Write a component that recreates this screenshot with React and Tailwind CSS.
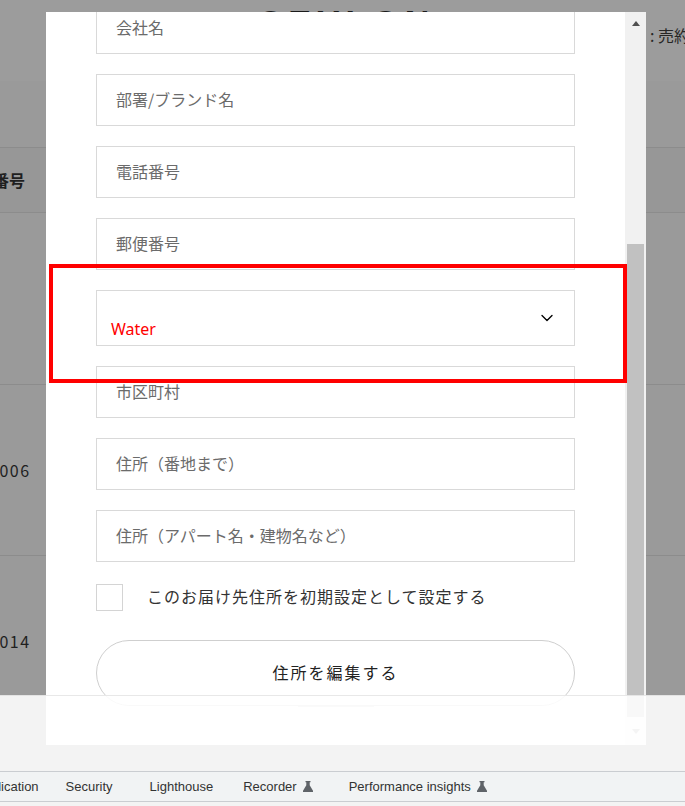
import { ChevronDown } from 'lucide-react';

const fields = ['会社名', '部署/ブランド名', '電話番号', '郵便番号'];
const fields2 = ['市区町村', '住所（番地まで）', '住所（アパート名・建物名など）'];

const Flask = () => (
  <svg width="10" height="11" viewBox="0 0 10 11" className="ml-[6px] text-[#5f6368]">
    <path d="M2.5 0h5v1.2h-0.8v3l3.3 5.6v1.2h-10v-1.2l3.3-5.6v-3h-0.8z" fill="currentColor" />
  </svg>
);

const TextField = ({ label }) => (
  <div className="h-[52px] border border-[#d9d9d9] flex items-center pl-[19px] pb-[2px] text-[16px] text-[#6b6b6b]">
    {label}
  </div>
);

const App = () => {
  return (
    <div className="relative w-[685px] h-[806px] overflow-hidden bg-[#9a9a9a] font-['Noto_Sans_CJK_JP',sans-serif]">
      {/* page under the dimmed overlay */}
      <div className="flex flex-col w-full">
        <div className="h-[81px] bg-[#9c9c9c] flex flex-col">
          <div className="h-[24px] flex justify-center pt-[5px] pl-[8px]">
            <span className="text-[34px] leading-none font-bold tracking-[6px] text-[#1a1a1a] font-['Liberation_Sans',sans-serif]">CEYLON</span>
          </div>
          <div className="pl-[650px] whitespace-nowrap text-[16px] text-[#262626] mt-[-1px]">: 売約済み</div>
        </div>
        <div className="h-[66px]" />
        <div className="h-[66px] border-y border-[#8c8c8c] bg-[#979797] flex items-center">
          <span className="ml-[-39px] text-[16px] font-bold text-[#1f1f1f] whitespace-nowrap">電話番号</span>
        </div>
        <div className="h-[172px] border-b border-[#8c8c8c]" />
        <div className="h-[171px] border-b border-[#8c8c8c] flex items-center">
          <span className="ml-[-11px] text-[16px] tracking-[1.5px] text-[#1f1f1f]">0006</span>
        </div>
        <div className="h-[170px] flex items-center">
          <span className="ml-[-11px] text-[16px] tracking-[1.5px] text-[#1f1f1f]">0014</span>
        </div>
      </div>

      {/* modal */}
      <div className="absolute left-[46px] top-[12px] w-[600px] h-[733px] bg-white flex overflow-hidden">
        <div className="flex-1 overflow-hidden">
          <div className="mt-[-10px] px-[50px] flex flex-col">
            <div className="flex flex-col gap-[20px]">
              {fields.map((f) => (
                <TextField key={f} label={f} />
              ))}
              <div className="h-[56px] border border-[#d9d9d9] flex justify-between pl-[14px] pr-[17px]">
                <span className="self-end pb-[4px] text-[16px] text-[#ff0000] font-['Noto_Sans',sans-serif]">Water</span>
                <ChevronDown className="self-center w-[20px] h-[20px] text-black" strokeWidth={1.6} />
              </div>
              {fields2.map((f) => (
                <TextField key={f} label={f} />
              ))}
            </div>
            <div className="mt-[22px] flex items-center">
              <div className="w-[27px] h-[27px] border border-[#d4d4d4]" />
              <span className="ml-[24px] pb-[3px] text-[16px] tracking-[1px] text-[#333]">このお届け先住所を初期設定として設定する</span>
            </div>
            <div className="mt-[29px] h-[66px] rounded-full border border-[#cfcfcf] flex items-center justify-center pb-[3px] text-[16px] tracking-[2px] text-[#222]">
              住所を編集する
            </div>
            <div className="self-center w-[76px] h-[1px] bg-[#d0d0d0]" />
          </div>
        </div>
        {/* scrollbar */}
        <div className="w-[21px] h-full bg-[#f1f1f1] flex flex-col items-center">
          <div className="h-[22px] flex items-center justify-center">
            <div className="w-0 h-0 border-x-[4.5px] border-x-transparent border-b-[5px] border-b-[#505050]" />
          </div>
          <div className="h-[210px]" />
          <div className="w-[17px] h-[473px] bg-[#c1c1c1]" />
          <div className="flex-1 flex items-center justify-center">
            <div className="w-0 h-0 border-x-[4.5px] border-x-transparent border-t-[5px] border-t-[#a3a3a3]" />
          </div>
        </div>
      </div>

      {/* red highlight */}
      <div className="absolute left-[49px] top-[264px] w-[578px] h-[119px] border-4 border-[#ff0000]" />

      {/* devtools panel */}
      <div className="absolute left-0 top-[695px] w-full h-[111px] flex flex-col">
        <div className="h-[76px] bg-white/[0.88] border-t border-[#d8d8d8]/60" />
        <div className="h-[31px] bg-[#f1f3f4] border-y border-[#cacdd1] flex items-center text-[13px] text-[#333] font-['Liberation_Sans',sans-serif] whitespace-nowrap">
          <span className="ml-[-25px]">Application</span>
          <span className="ml-[27px]">Security</span>
          <span className="ml-[37px]">Lighthouse</span>
          <span className="ml-[30px] flex items-center">Recorder<Flask /></span>
          <span className="ml-[36px] flex items-center">Performance insights<Flask /></span>
        </div>
        <div className="flex-1 bg-[#f3f3f3]" />
      </div>
    </div>
  );
};

export default App;
